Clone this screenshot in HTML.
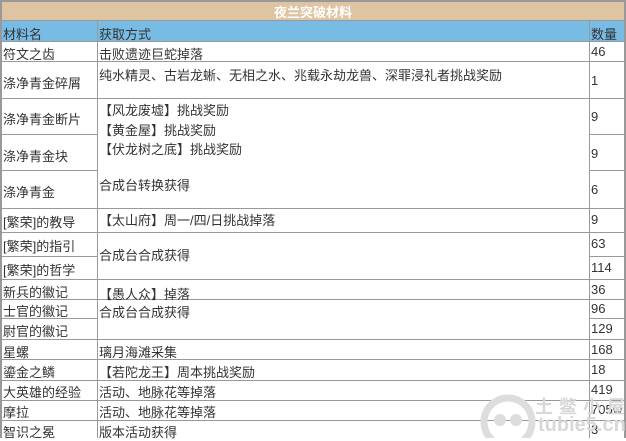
<!DOCTYPE html><html><head><meta charset="utf-8"><style>
body{margin:0;width:626px;height:438px;overflow:hidden;background:#fff;position:relative;font-family:"Liberation Sans","Noto Sans CJK SC",sans-serif;font-size:13px;color:#333}
.a{position:absolute;white-space:nowrap}
.h{position:absolute;background:#999;height:1px}
.v{position:absolute;background:#999;width:1px}
</style></head><body>
<div class="a" style="left:0;top:0;width:626px;height:20px;background:#dfc4a2"></div>
<div class="a" style="left:0;top:20px;width:626px;height:21px;background:#78bce6"></div>
<div class="a" style="left:0;top:2px;width:626px;text-align:center;color:#fff;font-weight:bold;font-size:13px">夜兰突破材料</div>
<div class="v" style="left:0;top:0;height:438px;width:2px"></div>
<div class="v" style="left:624px;top:0;height:438px;width:2px"></div>
<div class="h" style="left:0;top:0;width:626px;height:2px"></div>
<div class="h" style="left:0;top:20px;width:626px"></div>
<div class="v" style="left:97px;top:20px;height:418px"></div>
<div class="v" style="left:589px;top:20px;height:418px"></div>
<!-- full-width lines -->
<div class="h" style="left:0;top:41px;width:626px"></div>
<div class="h" style="left:0;top:61px;width:626px"></div>
<div class="h" style="left:0;top:98px;width:626px"></div>
<div class="h" style="left:0;top:134px;width:98px"></div><div class="h" style="left:589px;top:134px;width:37px"></div>
<div class="h" style="left:0;top:170px;width:98px"></div><div class="h" style="left:589px;top:170px;width:37px"></div>
<div class="h" style="left:0;top:208px;width:626px"></div>
<div class="h" style="left:0;top:232px;width:626px"></div>
<div class="h" style="left:0;top:256px;width:98px"></div><div class="h" style="left:589px;top:256px;width:37px"></div>
<div class="h" style="left:0;top:279px;width:626px"></div>
<div class="h" style="left:0;top:299px;width:626px"></div>
<div class="h" style="left:0;top:318px;width:98px"></div><div class="h" style="left:589px;top:318px;width:37px"></div>
<div class="h" style="left:0;top:339px;width:626px"></div>
<div class="h" style="left:0;top:359px;width:626px"></div>
<div class="h" style="left:0;top:380px;width:626px"></div>
<div class="h" style="left:0;top:400px;width:626px"></div>
<div class="h" style="left:0;top:420px;width:626px"></div>
<div class="a" style="left:3px;top:24px">材料名</div><div class="a" style="left:99px;top:24px">获取方式</div><div class="a" style="left:591px;top:24px">数量</div>
<div class="a" style="left:3px;top:44px">符文之齿</div><div class="a" style="left:99px;top:44px">击败遗迹巨蛇掉落</div><div class="a" style="left:591px;top:44px">46</div>
<div class="a" style="left:3px;top:73px">涤净青金碎屑</div><div class="a" style="left:99px;top:65px">纯水精灵、古岩龙蜥、无相之水、兆载永劫龙兽、深罪浸礼者挑战奖励</div><div class="a" style="left:591px;top:73px">1</div>
<div class="a" style="left:3px;top:109px">涤净青金断片</div><div class="a" style="left:591px;top:109px">9</div>
<div class="a" style="left:3px;top:146px">涤净青金块</div><div class="a" style="left:591px;top:146px">9</div>
<div class="a" style="left:3px;top:182px">涤净青金</div><div class="a" style="left:591px;top:182px">6</div>
<div class="a" style="left:99px;top:100px">【风龙废墟】挑战奖励</div>
<div class="a" style="left:99px;top:120px">【黄金屋】挑战奖励</div>
<div class="a" style="left:99px;top:139px">【伏龙树之底】挑战奖励</div>
<div class="a" style="left:99px;top:175px">合成台转换获得</div>
<div class="a" style="left:3px;top:212px">[繁荣]的教导</div><div class="a" style="left:99px;top:210px">【太山府】周一/四/日挑战掉落</div><div class="a" style="left:591px;top:212px">9</div>
<div class="a" style="left:3px;top:236px">[繁荣]的指引</div><div class="a" style="left:99px;top:245px">合成台合成获得</div><div class="a" style="left:591px;top:236px">63</div>
<div class="a" style="left:3px;top:260px">[繁荣]的哲学</div><div class="a" style="left:591px;top:260px">114</div>
<div class="a" style="left:3px;top:282px">新兵的徽记</div><div class="a" style="left:99px;top:284px">【愚人众】掉落</div><div class="a" style="left:591px;top:282px">36</div>
<div class="a" style="left:3px;top:301px">士官的徽记</div><div class="a" style="left:99px;top:302px">合成台合成获得</div><div class="a" style="left:591px;top:301px">96</div>
<div class="a" style="left:3px;top:321px">尉官的徽记</div><div class="a" style="left:591px;top:321px">129</div>
<div class="a" style="left:3px;top:342px">星螺</div><div class="a" style="left:99px;top:342px">璃月海滩采集</div><div class="a" style="left:591px;top:342px">168</div>
<div class="a" style="left:3px;top:362px">鎏金之鳞</div><div class="a" style="left:99px;top:362px">【若陀龙王】周本挑战奖励</div><div class="a" style="left:591px;top:362px">18</div>
<div class="a" style="left:3px;top:382px">大英雄的经验</div><div class="a" style="left:99px;top:382px">活动、地脉花等掉落</div><div class="a" style="left:591px;top:382px">419</div>
<div class="a" style="left:3px;top:402px">摩拉</div><div class="a" style="left:99px;top:402px">活动、地脉花等掉落</div><div class="a" style="left:591px;top:402px">705w</div>
<div class="a" style="left:3px;top:422px">智识之冕</div><div class="a" style="left:99px;top:422px">版本活动获得</div><div class="a" style="left:591px;top:422px">3</div>
<!-- watermark -->
<svg class="a" style="left:478px;top:390px" width="60" height="48"><circle cx="30" cy="32" r="24" fill="none" stroke="#ddd" stroke-width="7"/><circle cx="22" cy="30" r="6" fill="#ddd"/><circle cx="38" cy="30" r="6" fill="#ddd"/></svg>
<div class="a" style="left:535px;top:393px;color:#d8d8d8;font-size:18px;font-weight:bold;letter-spacing:6px">土鳖小屋</div>
<div class="a" style="left:538px;top:414px;color:#d8d8d8;font-size:20px;font-weight:bold">tubie5.cn</div>
</body></html>
